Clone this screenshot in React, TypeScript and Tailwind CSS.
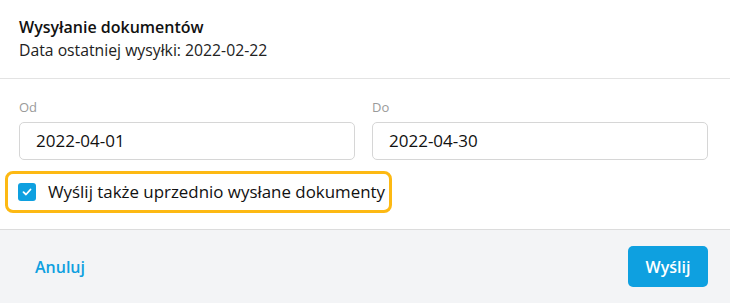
import React from 'react';

export default function App() {
  return (
    <div className="w-[730px] h-[303px] bg-white flex flex-col text-[#1a1a1a]" style={{ fontFamily: '"Open Sans", "Noto Sans", sans-serif' }}>
      <div className="px-[19px] pt-[15px] h-[79px] border-b border-[#e3e3e3]">
        <h2 className="text-[16px] leading-[25px] font-semibold text-[#111]">Wysyłanie dokumentów</h2>
        <p className="text-[15.75px] leading-[20px] text-[#222]">Data ostatniej wysyłki: 2022-02-22</p>
      </div>

      <div className="px-[19px] pt-[18px] h-[150px]">
        <div className="grid grid-cols-2 gap-[17px] pr-[3px]">
          <div>
            <label className="block text-[13px] leading-[20px] text-[#9a9a9a] mb-[5px]">Od</label>
            <div className="h-[38px] border border-[#d6d6d6] rounded-[5px] px-[16px] flex items-center text-[17px] text-[#111]">2022-04-01</div>
          </div>
          <div>
            <label className="block text-[13px] leading-[20px] text-[#9a9a9a] mb-[5px]">Do</label>
            <div className="h-[38px] border border-[#d6d6d6] rounded-[5px] px-[16px] flex items-center text-[17px] text-[#111]">2022-04-30</div>
          </div>
        </div>

        <div className="mt-[11px] -ml-[14px] w-[387px] h-[42px] border-[3px] border-[#fdb913] rounded-[8px] flex items-center pl-[10px] gap-[12px]">
          <span className="w-[18px] h-[18px] rounded-[3px] bg-[#0ea0e0] flex items-center justify-center">
            <svg width="12" height="12" viewBox="0 0 12 12" fill="none">
              <path d="M2.5 6.2 L5 8.5 L9.5 3.5" stroke="white" strokeWidth="1.8" strokeLinecap="round" strokeLinejoin="round" />
            </svg>
          </span>
          <span className="text-[16.9px] text-[#111]">Wyślij także uprzednio wysłane dokumenty</span>
        </div>
      </div>

      <div className="flex-1 bg-[#f3f4f6] border-t border-[#dcdcdc] flex items-center justify-between pl-[35px] pr-[22px]">
        <button className="text-[16px] font-semibold text-[#0ea0e0]">Anuluj</button>
        <button className="w-[80px] h-[41px] rounded-[5px] bg-[#0ea0e0] text-white text-[16px] font-semibold">Wyślij</button>
      </div>
    </div>
  );
}
